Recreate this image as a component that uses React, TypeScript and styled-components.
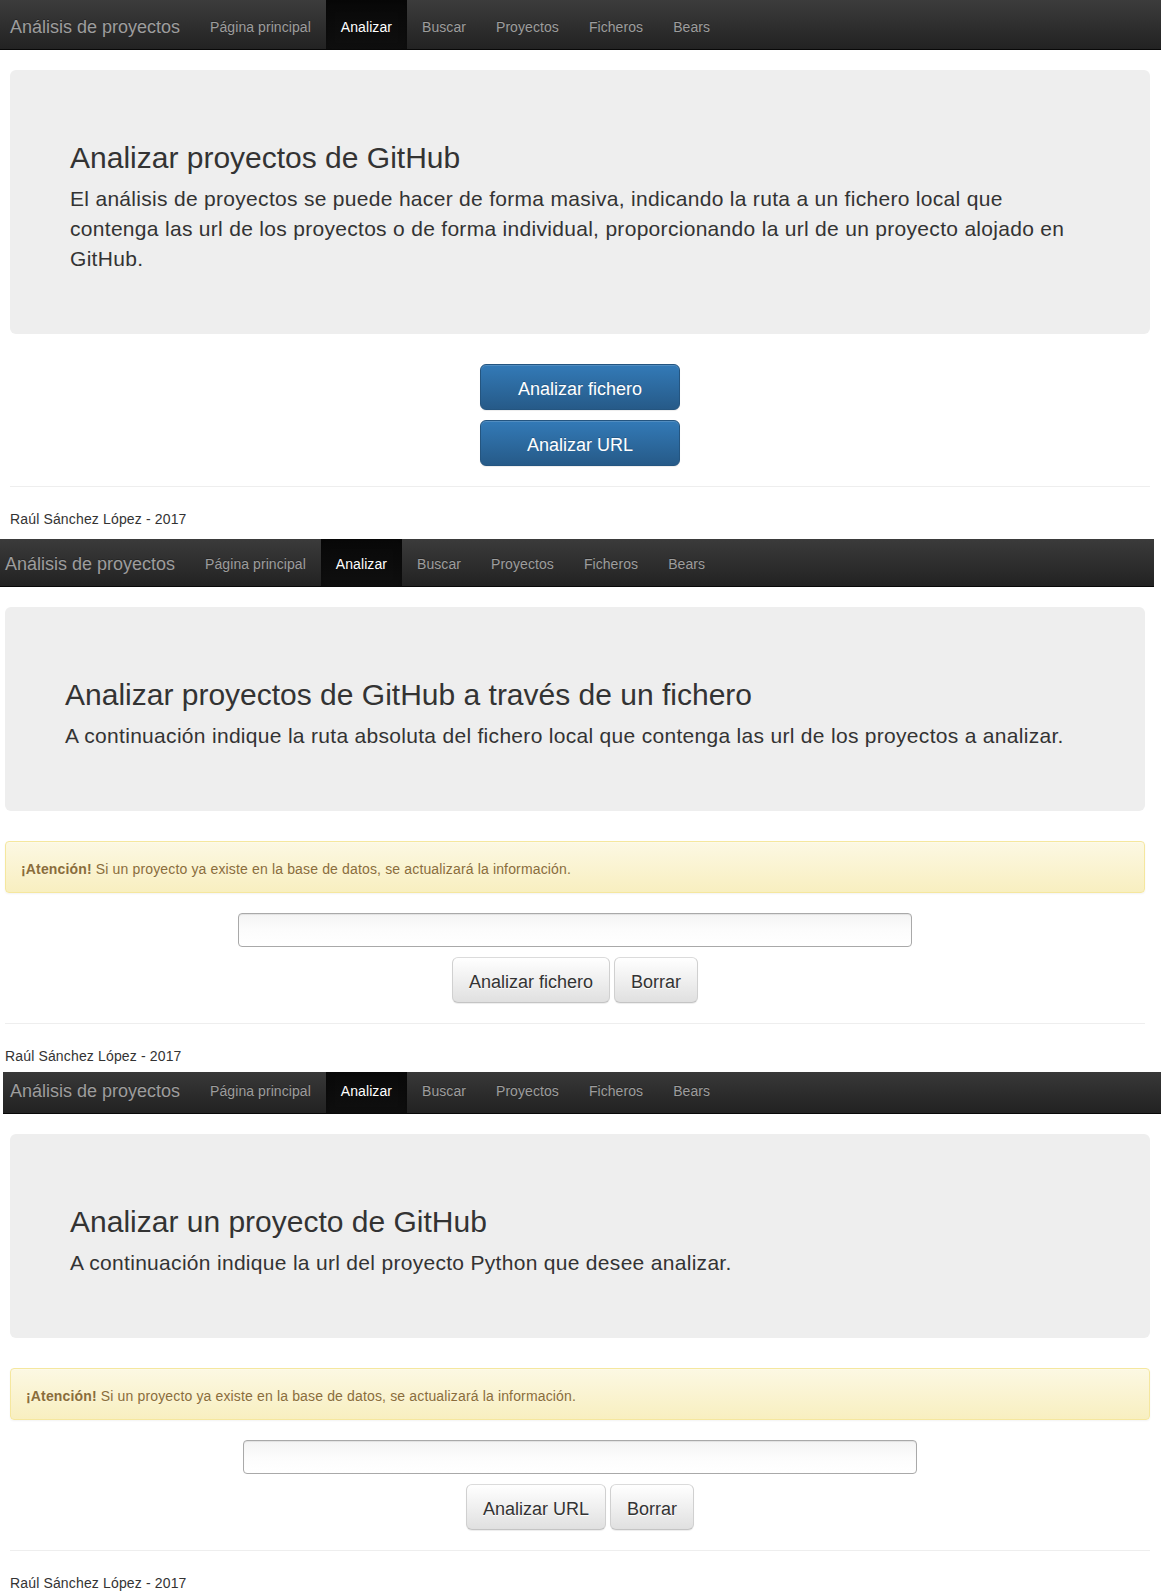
import React from "react";
import styled, { createGlobalStyle } from "styled-components";

const GlobalStyle = createGlobalStyle`
  html, body {
    margin: 0;
    padding: 0;
    background: #fff;
  }
  body {
    font-family: "Liberation Sans", Helvetica, Arial, sans-serif;
    font-size: 14px;
    line-height: 1.42857143;
    color: #333;
  }
  * {
    box-sizing: border-box;
  }
`;

const Page = styled.div`
  display: flex;
  flex-direction: column;
  width: 1161px;
  overflow: hidden;
`;

const Frame = styled.section<{ $gapAfter: number }>`
  display: flex;
  flex-direction: column;
  padding-bottom: ${(p) => p.$gapAfter}px;
`;

const NavClip = styled.div<{ $visible: number; $left: number; $right: number }>`
  height: ${(p) => p.$visible}px;
  overflow: hidden;
  display: flex;
  flex-direction: column;
  justify-content: flex-end;
  margin: 0 ${(p) => p.$right}px 20px ${(p) => p.$left}px;
`;

const Navbar = styled.nav`
  flex: 0 0 50px;
  height: 50px;
  display: flex;
  align-items: stretch;
  background-image: linear-gradient(to bottom, #3c3c3c 0, #222 100%);
  border-bottom: 1px solid #080808;
`;

const Brand = styled.a<{ $padLeft: number }>`
  display: block;
  padding: 17px 15px 12px ${(p) => p.$padLeft}px;
  font-size: 18px;
  line-height: 20px;
  color: #9d9d9d;
  text-decoration: none;
  text-shadow: 0 -1px 0 rgba(0, 0, 0, 0.25);
  white-space: nowrap;
`;

const NavList = styled.ul`
  display: flex;
  list-style: none;
  margin: 0;
  padding: 0;
`;

const NavItem = styled.li`
  display: flex;
`;

const NavLink = styled.a<{ $active?: boolean }>`
  display: block;
  padding: 17px 15px 12px;
  line-height: 20px;
  font-size: 14px;
  letter-spacing: 0.07px;
  color: ${(p) => (p.$active ? "#fff" : "#9d9d9d")};
  text-decoration: none;
  white-space: nowrap;
  text-shadow: 0 -1px 0 rgba(0, 0, 0, 0.25);
  background-image: ${(p) =>
    p.$active ? "linear-gradient(to bottom, #080808 0, #0f0f0f 100%)" : "none"};
  box-shadow: ${(p) => (p.$active ? "inset 0 3px 9px rgba(0, 0, 0, 0.25)" : "none")};
`;

const Container = styled.div<{ $inset: number }>`
  display: flex;
  flex-direction: column;
  width: 1140px;
  margin-left: ${(p) => p.$inset}px;
`;

const Jumbotron = styled.div`
  background: #eee;
  border-radius: 6px;
  padding: 48px 60px;
  margin-bottom: 30px;
`;

const Heading = styled.h2`
  margin: 23px 0 10px;
  font-size: 30px;
  font-weight: 500;
  line-height: 1.1;
  color: #333;
`;

const Lead = styled.p`
  margin: 0 0 12px;
  font-size: 21px;
  line-height: 30px;
  font-weight: 200;
  letter-spacing: 0.3px;
`;

const ButtonStack = styled.div`
  display: flex;
  flex-direction: column;
  align-items: center;
  gap: 10px;
`;

const PrimaryButton = styled.button`
  width: 200px;
  padding: 12px 16px 8px;
  font-family: inherit;
  font-size: 18px;
  line-height: 24px;
  color: #fff;
  border: 1px solid #245580;
  border-radius: 6px;
  background-image: linear-gradient(to bottom, #337ab7 0, #265a88 100%);
  text-shadow: 0 -1px 0 rgba(0, 0, 0, 0.2);
  box-shadow: inset 0 1px 0 rgba(255, 255, 255, 0.15), 0 1px 1px rgba(0, 0, 0, 0.075);
  cursor: pointer;
`;

const Alert = styled.div`
  padding: 17px 15px 13px;
  margin-bottom: 20px;
  border: 1px solid #f5e79e;
  border-radius: 4px;
  color: #8a6d3b;
  line-height: 20px;
  letter-spacing: 0.15px;
  background-image: linear-gradient(to bottom, #fcf8e3 0, #f8efc0 100%);
  text-shadow: 0 1px 0 rgba(255, 255, 255, 0.2);
  box-shadow: inset 0 1px 0 rgba(255, 255, 255, 0.25), 0 1px 2px rgba(0, 0, 0, 0.05);

  strong {
    font-weight: bold;
  }
`;

const Form = styled.form`
  display: flex;
  flex-direction: column;
  align-items: center;
`;

const TextInput = styled.input`
  width: 674px;
  height: 34px;
  margin: 0 0 10px;
  padding: 6px 12px;
  font-family: inherit;
  font-size: 14px;
  border: 1px solid #a9a9a9;
  border-radius: 4px;
  background: linear-gradient(to bottom, #f4f4f4 0, #fcfcfc 50%, #fff 100%);
  box-shadow: inset 0 1px 1px rgba(0, 0, 0, 0.075);
`;

const ButtonRow = styled.div`
  display: flex;
  justify-content: center;
  gap: 4px;
`;

const DefaultButton = styled.button`
  padding: 12px 16px 8px;
  font-family: inherit;
  font-size: 18px;
  line-height: 24px;
  color: #333;
  border: 1px solid #ccc;
  border-color: #dbdbdb #d0d0d0 #c4c4c4;
  border-radius: 6px;
  background-image: linear-gradient(to bottom, #fff 0, #e0e0e0 100%);
  text-shadow: 0 1px 0 #fff;
  box-shadow: inset 0 1px 0 rgba(255, 255, 255, 0.15), 0 1px 1px rgba(0, 0, 0, 0.075);
  cursor: pointer;
`;

const Rule = styled.hr`
  margin: 20px 0;
  height: 0;
  border: 0;
  border-top: 1px solid #eee;
`;

const Footer = styled.p`
  margin: 0;
  padding-top: 2px;
  line-height: 20px;
  font-size: 14px;
  letter-spacing: 0.15px;
  color: #333;
`;

const navItems = ["Página principal", "Analizar", "Buscar", "Proyectos", "Ficheros", "Bears"];

type NavProps = { visible: number; left: number; right: number; brandPad: number };

function TopNav({ visible, left, right, brandPad }: NavProps) {
  return (
    <NavClip $visible={visible} $left={left} $right={right}>
      <Navbar>
        <Brand $padLeft={brandPad}>Análisis de proyectos</Brand>
        <NavList>
          {navItems.map((item) => (
            <NavItem key={item}>
              <NavLink $active={item === "Analizar"}>{item}</NavLink>
            </NavItem>
          ))}
        </NavList>
      </Navbar>
    </NavClip>
  );
}

function Warning() {
  return (
    <Alert>
      <strong>¡Atención!</strong> Si un proyecto ya existe en la base de datos, se actualizará la
      información.
    </Alert>
  );
}

export default function App() {
  return (
    <>
      <GlobalStyle />
      <Page>
        <Frame $gapAfter={10}>
          <TopNav visible={50} left={0} right={0} brandPad={10} />
          <Container $inset={10}>
            <Jumbotron>
              <Heading>Analizar proyectos de GitHub</Heading>
              <Lead>
                El análisis de proyectos se puede hacer de forma masiva, indicando la ruta a un
                fichero local que contenga las url de los proyectos o de forma individual,
                proporcionando la url de un proyecto alojado en GitHub.
              </Lead>
            </Jumbotron>
            <ButtonStack>
              <PrimaryButton>Analizar fichero</PrimaryButton>
              <PrimaryButton>Analizar URL</PrimaryButton>
            </ButtonStack>
            <Rule />
            <Footer>Raúl Sánchez López - 2017</Footer>
          </Container>
        </Frame>

        <Frame $gapAfter={6}>
          <TopNav visible={48} left={0} right={7} brandPad={5} />
          <Container $inset={5}>
            <Jumbotron>
              <Heading>Analizar proyectos de GitHub a través de un fichero</Heading>
              <Lead>
                A continuación indique la ruta absoluta del fichero local que contenga las url de
                los proyectos a analizar.
              </Lead>
            </Jumbotron>
            <Warning />
            <Form onSubmit={(e) => e.preventDefault()}>
              <TextInput type="text" />
              <ButtonRow>
                <DefaultButton type="submit">Analizar fichero</DefaultButton>
                <DefaultButton type="reset">Borrar</DefaultButton>
              </ButtonRow>
            </Form>
            <Rule />
            <Footer>Raúl Sánchez López - 2017</Footer>
          </Container>
        </Frame>

        <Frame $gapAfter={0}>
          <TopNav visible={42} left={3} right={0} brandPad={7} />
          <Container $inset={10}>
            <Jumbotron>
              <Heading>Analizar un proyecto de GitHub</Heading>
              <Lead>A continuación indique la url del proyecto Python que desee analizar.</Lead>
            </Jumbotron>
            <Warning />
            <Form onSubmit={(e) => e.preventDefault()}>
              <TextInput type="text" />
              <ButtonRow>
                <DefaultButton type="submit">Analizar URL</DefaultButton>
                <DefaultButton type="reset">Borrar</DefaultButton>
              </ButtonRow>
            </Form>
            <Rule />
            <Footer>Raúl Sánchez López - 2017</Footer>
          </Container>
        </Frame>
      </Page>
    </>
  );
}
